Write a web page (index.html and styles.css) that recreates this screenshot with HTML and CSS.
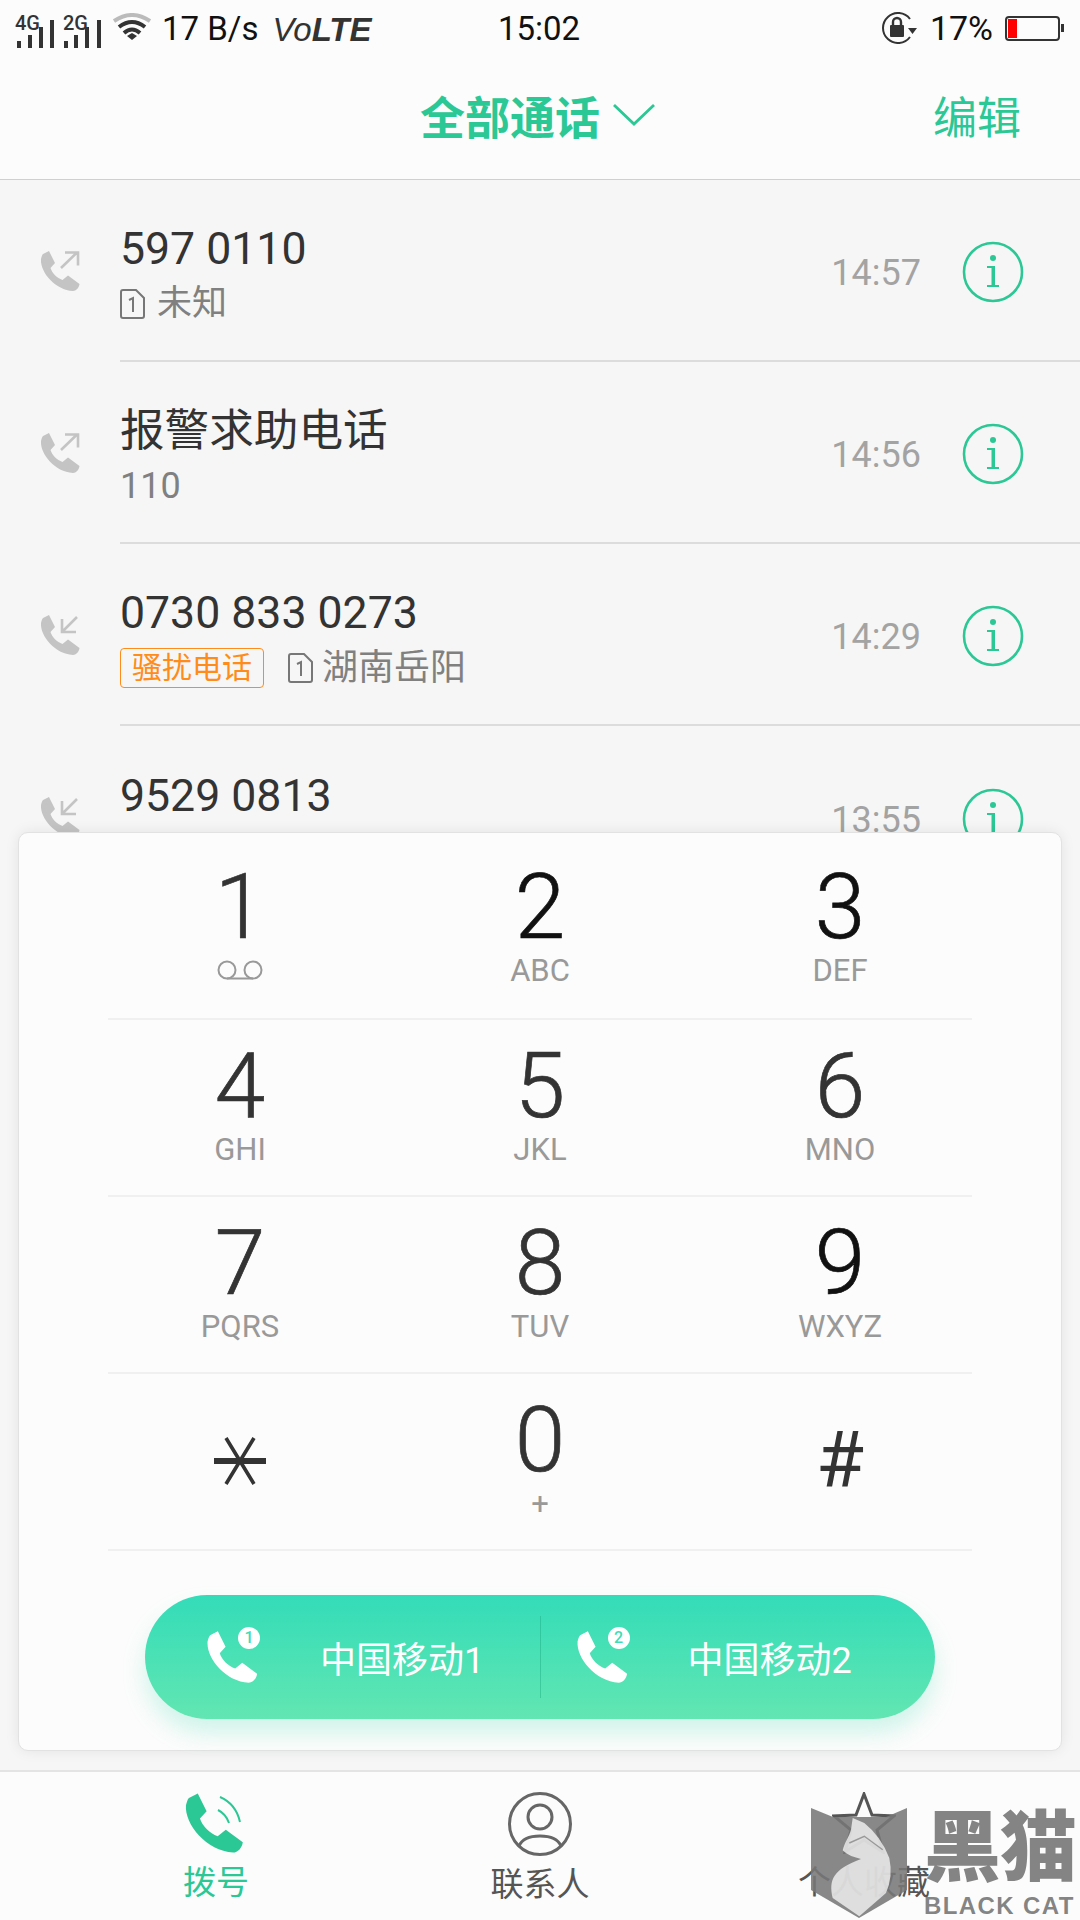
FILE: index.html
```html
<!DOCTYPE html>
<html lang="zh">
<head>
<meta charset="utf-8">
<title>拨号</title>
<link rel="stylesheet" href="styles.css">
</head>
<body>
<svg class="defs" width="0" height="0">
  <symbol id="handset" viewBox="0 0 40 42"><path d="M3 4 L9 1 L15 13 L10.5 18 C12 23 17 28 22.5 30 L28 25.5 L39.5 34 C39 38 36 41 33 41 C15 40 0 22 1 9 C1.5 7 2 5 3 4Z"/></symbol>
  <symbol id="sim" viewBox="0 0 25 30"><path d="M3 1 H16 L24 9 V27 Q24 29 22 29 H3 Q1 29 1 27 V3 Q1 1 3 1Z" fill="none" stroke="#777" stroke-width="2"/><path d="M9 11 L13 9 V23" fill="none" stroke="#777" stroke-width="2"/></symbol>
  <symbol id="info" viewBox="0 0 62 62"><circle cx="31" cy="31" r="29" fill="none" stroke="#2bc896" stroke-width="2.6"/><circle cx="31" cy="17" r="3" fill="#2bc896"/><path d="M25 25 H33 V44 H37 V46 H25 V44 H29.5 V27 H25Z" fill="#2bc896"/></symbol>
</svg>
<div class="phone">
  <div class="status">
    <div class="status-left">
      <svg class="sig" width="42" height="42" viewBox="0 0 42 42"><g fill="#333"><rect x="3" y="34" width="4" height="7"/><rect x="14" y="28" width="4" height="13"/><rect x="25" y="20" width="4" height="21"/><rect x="36" y="13" width="4" height="28"/></g><text x="1" y="23" class="sig-text">4G</text></svg>
      <svg class="sig" width="42" height="42" viewBox="0 0 42 42"><g fill="#333"><rect x="3" y="34" width="4" height="7"/><rect x="13" y="28" width="4" height="13"/><rect x="24" y="20" width="4" height="21"/><rect x="36" y="13" width="4" height="28"/></g><text x="2" y="23" class="sig-text">2G</text></svg>
      <svg class="wifi" width="38" height="27" viewBox="0 0 38 27"><path d="M1 8 Q19 -4 37 8" fill="none" stroke="#bbb" stroke-width="4"/><path d="M6 14 Q19 4 32 14" fill="none" stroke="#333" stroke-width="4"/><path d="M11 20 Q19 13 27 20" fill="none" stroke="#333" stroke-width="4"/><path d="M14 23 L19 20 L24 23 L19 27Z" fill="#333"/></svg>
      <span class="speed">17 B/s</span>
      <span class="volte">Vo<b>LTE</b></span>
    </div>
    <div class="status-time">15:02</div>
    <div class="status-right">
      <svg class="rot" width="36" height="32" viewBox="0 0 36 32"><path d="M29 7 A15 15 0 1 0 29 25" fill="none" stroke="#333" stroke-width="2"/><path d="M27 16 H36 L31.5 22Z" fill="#333"/><rect x="9" y="13" width="14" height="12" rx="1" fill="#333"/><path d="M12 13 V10 A4 4 0 0 1 20 10 V13" fill="none" stroke="#333" stroke-width="2.4"/></svg>
      <span class="pct">17%</span>
      <div class="battery"><div class="battery-fill"></div></div>
      <div class="battery-nub"></div>
    </div>
  </div>
  <header class="header">
    <div class="title">全部通话<svg class="chev" width="42" height="22" viewBox="0 0 42 22"><path d="M1 1 L21 20 L41 1" fill="none" stroke="#2bc896" stroke-width="2.8"/></svg></div>
    <div class="edit">编辑</div>
  </header>
  <main class="main">
    <div class="list">
      <div class="row">
        <svg class="call" width="42" height="42" viewBox="0 0 42 42"><use href="#handset" width="40" height="42"/><path d="M21 18 L37 2.5 M25 2.5 H38 V15.5" class="arrow"/></svg>
        <div class="row-body">
          <div class="row-text"><div class="name">597 0110</div><div class="sub"><svg class="simi" width="25" height="30"><use href="#sim"/></svg><span class="place short">未知</span></div></div>
          <div class="time">14:57</div><svg class="info" width="62" height="62"><use href="#info"/></svg>
        </div>
      </div>
      <div class="row">
        <svg class="call" width="42" height="42" viewBox="0 0 42 42"><use href="#handset" width="40" height="42"/><path d="M21 18 L37 2.5 M25 2.5 H38 V15.5" class="arrow"/></svg>
        <div class="row-body">
          <div class="row-text"><div class="name">报警求助电话</div><div class="sub num">110</div></div>
          <div class="time">14:56</div><svg class="info" width="62" height="62"><use href="#info"/></svg>
        </div>
      </div>
      <div class="row">
        <svg class="call" width="42" height="42" viewBox="0 0 42 42"><use href="#handset" width="40" height="42"/><path d="M37 3 L22 18 M22 5 V18 H36" class="arrow"/></svg>
        <div class="row-body">
          <div class="row-text"><div class="name">0730 833 0273</div><div class="sub"><span class="tag">骚扰电话</span><svg class="simi" width="25" height="30"><use href="#sim"/></svg><span class="place">湖南岳阳</span></div></div>
          <div class="time">14:29</div><svg class="info" width="62" height="62"><use href="#info"/></svg>
        </div>
      </div>
      <div class="row last">
        <svg class="call" width="42" height="42" viewBox="0 0 42 42"><use href="#handset" width="40" height="42"/><path d="M37 3 L22 18 M22 5 V18 H36" class="arrow"/></svg>
        <div class="row-body">
          <div class="row-text"><div class="name">9529 0813</div><div class="sub">&nbsp;</div></div>
          <div class="time">13:55</div><svg class="info" width="62" height="62"><use href="#info"/></svg>
        </div>
      </div>
    </div>
    <section class="dialer">
      <div class="keypad">
        <div class="key-row first">
          <div class="key"><div class="digit dark">1</div><svg class="vm" width="46" height="20" viewBox="0 0 46 20"><circle cx="10" cy="10" r="8.5"/><circle cx="36" cy="10" r="8.5"/><path d="M10 18.5 H36"/></svg></div>
          <div class="key"><div class="digit">2</div><div class="letters">ABC</div></div>
          <div class="key"><div class="digit">3</div><div class="letters">DEF</div></div>
        </div>
        <div class="key-row">
          <div class="key"><div class="digit dark">4</div><div class="letters">GHI</div></div>
          <div class="key"><div class="digit dark">5</div><div class="letters">JKL</div></div>
          <div class="key"><div class="digit dark">6</div><div class="letters">MNO</div></div>
        </div>
        <div class="key-row">
          <div class="key"><div class="digit dark">7</div><div class="letters">PQRS</div></div>
          <div class="key"><div class="digit dark">8</div><div class="letters">TUV</div></div>
          <div class="key"><div class="digit">9</div><div class="letters">WXYZ</div></div>
        </div>
        <div class="key-row">
          <div class="key sym"><svg class="star" width="54" height="48" viewBox="0 0 54 48" aria-label="*"><path d="M13 1 L41 47 M41 1 L13 47" stroke-width="3.6"/><path d="M1 24 H53" stroke-width="6"/></svg></div>
          <div class="key"><div class="digit dark">0</div><div class="letters">+</div></div>
          <div class="key sym"><div class="hash">#</div></div>
        </div>
      </div>
      <div class="call-btn">
        <div class="sim-half a">
          <div class="badge-phone"><svg class="btn-phone" width="54" height="54"><use href="#handset" width="54" height="54"/></svg><span class="badge">1</span></div>
          <span class="carrier">中国移动1</span>
        </div>
        <div class="sim-half b">
          <div class="badge-phone"><svg class="btn-phone" width="54" height="54"><use href="#handset" width="54" height="54"/></svg><span class="badge">2</span></div>
          <span class="carrier">中国移动2</span>
        </div>
      </div>
    </section>
  </main>
  <nav class="nav">
    <div class="nav-item active">
      <svg class="nav-ico" width="64" height="62" viewBox="0 0 64 62"><use href="#handset" width="60" height="62" fill="#2bc896"/><path d="M36 5 Q52 12 56 30 M34 18 Q42 22 45 31" fill="none" stroke="#2bc896" stroke-width="2"/></svg>
      <span>拨号</span>
    </div>
    <div class="nav-item">
      <svg class="nav-ico" width="64" height="64" viewBox="0 0 64 64" fill="none" stroke="#666" stroke-width="3"><circle cx="32" cy="32" r="30.5"/><circle cx="32" cy="25" r="12"/><path d="M11 54 C14 47 22 44 32 44 C42 44 50 47 53 54"/></svg>
      <span>联系人</span>
    </div>
    <div class="nav-item">
      <svg class="nav-ico" width="64" height="62" viewBox="0 0 64 62" fill="none" stroke="#555" stroke-width="3"><path d="M32 2 L40 23 L62 24 L45 38 L51 60 L32 48 L13 60 L19 38 L2 24 L24 23Z"/></svg>
      <span>个人收藏</span>
    </div>
  </nav>
  <div class="watermark">
    <svg class="wm-logo" width="100" height="114" viewBox="0 0 100 114"><path d="M1 1 L23 10 L76 10 L97 1 V83 L49 111 L1 83Z" fill="#777" fill-opacity=".88"/><path d="M42.7 11 L54.3 16 Q71 29.3 79.3 51 Q83.3 69.3 76 86 L49.3 109.3 L22.7 91 C18.7 72.7 22.7 62.7 51 52 C44.3 50 37.7 48.7 32.7 43.3 C34.3 36 39.3 29.3 41 22.7Z" fill="#fff" fill-opacity=".72"/><path d="M39.3 36 L54.3 29.3 L72.7 42.7" fill="none" stroke="#999" stroke-width="1.4"/></svg>
    <div class="wm-text"><div class="wm-cn">黑猫</div><div class="wm-en">BLACK CAT</div></div>
  </div>
</div>
</body>
</html>
```
FILE: styles.css
```css
* { box-sizing: border-box; }
html, body { margin: 0; padding: 0; }
body { font-family: Roboto, "Noto Sans CJK SC", sans-serif; background: #f6f6f6; color: #333; }
.defs { position: absolute; }
.phone { position: relative; width: 1080px; height: 1920px; overflow: hidden; display: flex; flex-direction: column; background: #f6f6f6; }

.status { height: 56px; flex: none; background: #fcfcfc; display: flex; align-items: center; padding: 0 16px 0 14px; position: relative; }
.status-left { display: flex; align-items: center; flex: 1; }
.sig { margin-right: 5px; }
.sig-text { font: 500 20px Roboto, sans-serif; fill: #333; }
.wifi { margin: -3px 12px 0 5px; flex: none; }
.speed { font-size: 33px; color: #111; margin-left: -1px; }
.volte { font-family: "Liberation Sans", sans-serif; font-style: italic; font-size: 33px; margin: 3px 0 0 14px; color: #333; }
.status-time { font-size: 33px; color: #111; width: 96px; text-align: center; }
.status-right { display: flex; align-items: center; flex: 1; justify-content: flex-end; }
.pct { font-size: 34px; color: #111; margin: 0 12px 0 13px; }
.battery { width: 55px; height: 25px; border: 2px solid #333; border-radius: 4px; padding: 1px 0 1px 1px; }
.battery-fill { height: 100%; background: #f00; width: 9px; }
.battery-nub { width: 3px; height: 8px; background: #333; margin-left: 1px; }

.header { height: 124px; flex: none; background: #fcfcfc; border-bottom: 1px solid #d0d0d0; display: flex; align-items: center; justify-content: flex-end; padding: 0 59px 5px 0; position: relative; }
.title { font-size: 45px; font-weight: 700; color: #2bc896; display: flex; align-items: center; margin-right: 278px; }
.chev { margin-left: 13px; }
.edit { font-size: 44px; color: #2bc896; }

.main { flex: 1; position: relative; overflow: hidden; }
.list { display: flex; flex-direction: column; }
.row { height: 182px; flex: none; display: flex; align-items: center; padding-left: 40px; }
.row.last .row-body { border-bottom: 0; }
.call { flex: none; margin-right: 38px; fill: #c4c4c4; margin-top: -1px; }
.arrow { fill: none; stroke: #c4c4c4; stroke-width: 2.6; }
.row-body { flex: 1; height: 100%; display: flex; align-items: center; border-bottom: 2px solid #dcdcdc; padding-right: 56px; }
.row-text { flex: 1; display: flex; flex-direction: column; margin-top: 8px; }
.name { font-size: 44.6px; line-height: 60px; color: #333; }
.sub { font-size: 36px; line-height: 50px; color: #808080; display: flex; align-items: center; }
.place.short { font-size: 35px; margin-left: 3px; }
.simi { margin-right: 9px; }
.tag { font-size: 30px; line-height: 38px; height: 40px; padding: 0 11px; border: 1px solid #ff8c1a; border-radius: 4px; color: #ff8c1a; margin-right: 24px; }
.time { font-size: 36px; color: #a3a3a3; margin-right: 41px; margin-top: 6px; }
.info { flex: none; margin-top: 4px; }

.dialer { position: absolute; left: 18px; right: 18px; bottom: 19px; height: 919px; background: #fcfcfc; border: 1px solid #e2e2e2; border-radius: 10px; box-shadow: 0 0 14px rgba(0,0,0,.08); display: flex; flex-direction: column; align-items: center; }
.keypad { width: 900px; display: flex; flex-direction: column; }
.key-row { height: 177.3px; display: flex; background: linear-gradient(#f0f0f0, #f0f0f0) center bottom / 864px 2px no-repeat; }
.key-row.first { height: 186.6px; padding-top: 8px; }
.key { width: 300px; display: flex; flex-direction: column; align-items: center; padding-top: 20px; }
.key.sym { justify-content: center; padding: 0 0 4px; }
.digit { font-size: 91px; font-weight: 300; line-height: 92px; color: #333; -webkit-text-stroke: .7px currentColor; }
.digit:not(.dark) { color: #111; }
.letters { font-size: 31px; line-height: 36px; color: #999; }
.vm { margin-top: 7px; fill: none; stroke: #999; stroke-width: 2; }
.star { fill: none; stroke: #333; }
.hash { font-size: 78px; line-height: 78px; font-weight: 400; color: #333; }

.call-btn { margin-top: 44px; width: 790px; height: 124px; border-radius: 62px; background: linear-gradient(#33dcb8, #62e6b2); box-shadow: 0 14px 22px rgba(80,225,185,.25); display: flex; align-items: center; }
.sim-half { display: flex; align-items: center; height: 82px; width: 395px; }
.sim-half.a { width: 396px; padding-left: 60px; border-right: 1px solid rgba(30,170,130,.45); }
.sim-half.b { padding-left: 34px; }
.badge-phone { position: relative; width: 54px; height: 54px; flex: none; }
.btn-phone { fill: #fff; display: block; }
.badge { position: absolute; right: -1px; top: -3px; width: 22px; height: 22px; border-radius: 50%; background: #fff; color: #3fdcb5; font-size: 16px; font-weight: 500; line-height: 22px; text-align: center; }
.carrier { font-size: 36px; color: #fff; margin-left: 61px; }
.sim-half.b .carrier { margin-left: 59px; }

.nav { height: 150px; flex: none; background: #fcfcfc; border-top: 2px solid #e4e4e4; display: flex; justify-content: center; padding-top: 20px; }
.nav-item { width: 324px; display: flex; flex-direction: column; align-items: center; font-size: 33px; color: #555; }
.nav-item span { line-height: 44px; margin-top: 7px; }
.nav-item.active { color: #2bc896; }
.nav-ico { display: block; }

.watermark { position: absolute; left: 810px; top: 1807px; display: flex; gap: 14px; align-items: flex-start; }
.wm-logo { flex: none; }
.wm-cn { font-size: 77px; line-height: 84px; font-weight: 900; color: rgba(110,110,110,.85); letter-spacing: -1px; }
.wm-en { font: 700 24px "Liberation Sans", sans-serif; line-height: 26px; color: rgba(110,110,110,.85); letter-spacing: 1.4px; margin-top: 2px; white-space: nowrap; }
```
